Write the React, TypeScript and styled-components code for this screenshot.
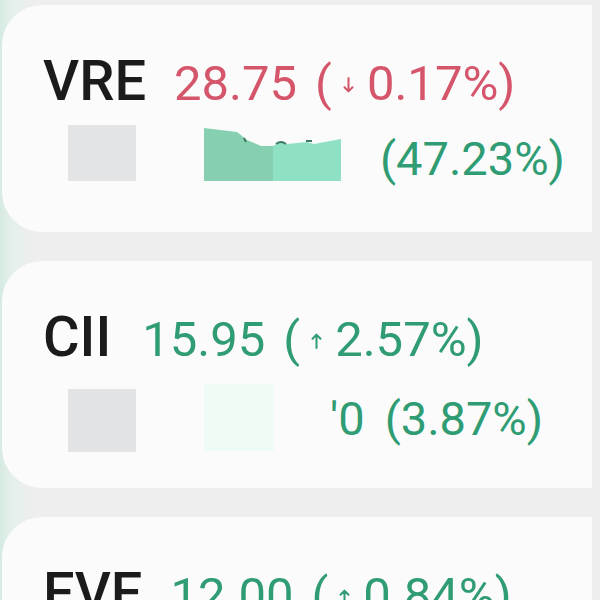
import React from "react";
import styled, { createGlobalStyle } from "styled-components";

const Global = createGlobalStyle`
  html, body { margin: 0; padding: 0; background: #eeeeee; }
  body { font-family: Roboto, "Noto Sans", Arial, sans-serif; }
`;

const RED = "#d5566b";
const GREEN = "#2f9c74";

const Page = styled.div`
  width: 600px;
  height: 600px;
  overflow: hidden;
  box-sizing: border-box;
  padding: 5px 8px 0 2px;
  display: flex;
  flex-direction: column;
  gap: 29px;
  background: linear-gradient(90deg, #d6ebe2 0px, #e3efea 10px, #eeeeee 36px);
`;

const Card = styled.div`
  flex: 0 0 227px;
  box-sizing: border-box;
  background: #fbfbfb;
  border-radius: 40px 0 0 40px;
  padding: 48px 0 0 41px;
  display: flex;
  flex-direction: column;
`;

const TopRow = styled.div`
  display: flex;
  align-items: baseline;
`;

const Ticker = styled.span`
  font-size: 56px;
  line-height: 1;
  font-weight: 500;
  color: #1b1b1b;
`;

const Price = styled.span<{ $up: boolean; $ml: number }>`
  margin-left: ${(p) => p.$ml}px;
  font-size: 49px;
  line-height: 1;
  font-weight: 400;
  color: ${(p) => (p.$up ? GREEN : RED)};
  white-space: nowrap;
`;

const Open = styled.span`
  margin-left: 18px;
`;

const ArrowSvg = styled.svg`
  display: inline-block;
  width: 11px;
  height: 16px;
  margin: 0 13px 0 11px;
  vertical-align: 7px;
`;

const Arrow = ({ up }: { up: boolean }) => (
  <ArrowSvg viewBox="0 0 11 16">
    {up ? (
      <path d="M5.5 15V2M1.5 5.8L5.5 1.6l4 4.2" fill="none" stroke="currentColor" strokeWidth="2" strokeLinecap="round" strokeLinejoin="round" />
    ) : (
      <path d="M5.5 1v13M1.5 10.2L5.5 14.4l4-4.2" fill="none" stroke="currentColor" strokeWidth="2" strokeLinecap="round" strokeLinejoin="round" />
    )}
  </ArrowSvg>
);

const BottomRow = styled.div`
  display: flex;
  align-items: flex-start;
  margin-top: 14px;
`;

const Blob = styled.div<{ $ml: number; $mt: number; $w: number; $h: number; $bg: string }>`
  margin-left: ${(p) => p.$ml}px;
  margin-top: ${(p) => p.$mt}px;
  width: ${(p) => p.$w}px;
  height: ${(p) => p.$h}px;
  background: ${(p) => p.$bg};
  flex: none;
`;

const ChartSvg = styled.svg`
  display: block;
  margin-left: 68px;
  margin-top: 4px;
  flex: none;
`;

const Change = styled.span<{ $ml: number; $mt: number }>`
  margin-left: ${(p) => p.$ml}px;
  margin-top: ${(p) => p.$mt}px;
  font-size: 47px;
  line-height: 1;
  color: ${GREEN};
  white-space: nowrap;
`;

const Gap = styled.span`
  margin-left: 20px;
`;

const Chart = () => (
  <ChartSvg width="137" height="54" viewBox="0 0 137 54">
    <path d="M0 1L33 5L43 13L57 19L69 19L69 54L0 54Z" fill="#86cfb1" />
    <path d="M69 19L77 15L83 17L103 15L110 17L137 12L137 54L69 54Z" fill="#8ee1c2" />
    <path d="M40 11l2 4M72 17q5-4 10 0M102 14h6" stroke="#3e7a62" strokeWidth="2" fill="none" />
  </ChartSvg>
);

type Item = {
  ticker: string;
  price: string;
  pct: string;
  up: boolean;
  gap: number;
};

const items: Item[] = [
  { ticker: "VRE", price: "28.75", pct: "0.17%", up: false, gap: 28 },
  { ticker: "CII", price: "15.95", pct: "2.57%", up: true, gap: 31 },
  { ticker: "EVE", price: "12.00", pct: "0.84%", up: true, gap: 28 },
];

const Head = ({ it }: { it: Item }) => (
  <TopRow>
    <Ticker>{it.ticker}</Ticker>
    <Price $up={it.up} $ml={it.gap}>
      {it.price}
      <Open>(</Open>
      <Arrow up={it.up} />
      {it.pct})
    </Price>
  </TopRow>
);

export default function App() {
  return (
    <>
      <Global />
      <Page>
        <Card>
          <Head it={items[0]} />
          <BottomRow>
            <Blob $ml={25} $mt={2} $w={68} $h={56} $bg="#e3e4e6" />
            <Chart />
            <Change $ml={39} $mt={12}>(47.23%)</Change>
          </BottomRow>
        </Card>
        <Card>
          <Head it={items[1]} />
          <BottomRow>
            <Blob $ml={25} $mt={10} $w={68} $h={63} $bg="#e2e3e5" />
            <Blob $ml={68} $mt={5} $w={70} $h={67} $bg="#effcf6" />
            <Change $ml={56} $mt={16}>
              '0<Gap>(3.87%)</Gap>
            </Change>
          </BottomRow>
        </Card>
        <Card>
          <Head it={items[2]} />
        </Card>
      </Page>
    </>
  );
}
